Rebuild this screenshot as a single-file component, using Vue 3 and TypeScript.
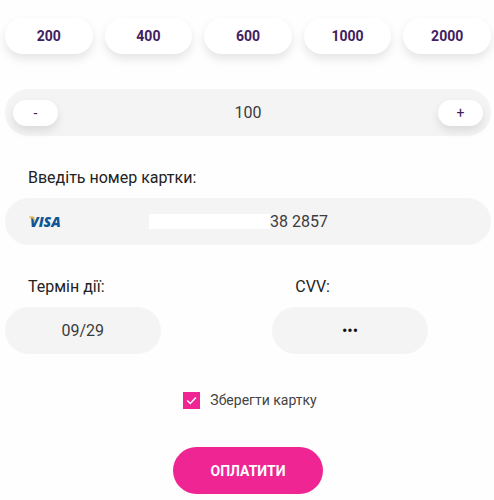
<script setup lang="ts">
import { ref } from 'vue'

const presets: number[] = [200, 400, 600, 1000, 2000]
const amount = ref<number>(100)
const cardTail = ref<string>('38 2857')
const expiry = ref<string>('09/29')
const cvv = ref<string>('•••')
const saveCard = ref<boolean>(true)

function change(step: number): void {
  amount.value = Math.max(0, amount.value + step)
}
</script>

<template>
  <form class="payment" @submit.prevent>
    <div class="presets">
      <button v-for="value in presets" :key="value" type="button" class="preset" @click="amount = value">
        {{ value }}
      </button>
    </div>

    <div class="field amount">
      <button type="button" class="step" @click="change(-10)">-</button>
      <input v-model.number="amount" class="entry" type="text" inputmode="numeric" aria-label="Сума" />
      <button type="button" class="step" @click="change(10)">+</button>
    </div>

    <label class="caption" for="card">Введіть номер картки:</label>
    <div class="field card">
      <svg class="brand" viewBox="0 0 40 24" role="img" aria-label="VISA">
        <text x="1" y="17" fill="#0f5494">VISA</text>
        <path d="M0 6.4h4.2q.8 0 1 .8l.8 4.2Q4.200 8 0 6.900z" fill="#e0aa3c" />
      </svg>
      <span class="mask"></span>
      <input id="card" v-model="cardTail" class="entry card-entry" type="text" />
    </div>

    <div class="details">
      <div class="detail">
        <label class="caption" for="expiry">Термін дії:</label>
        <input id="expiry" v-model="expiry" class="field entry" type="text" />
      </div>
      <div class="detail">
        <label class="caption" for="cvv">CVV:</label>
        <input id="cvv" v-model="cvv" class="field entry cvv" type="text" />
      </div>
    </div>

    <label class="save">
      <span class="tick">
        <input v-model="saveCard" type="checkbox" />
        <svg v-if="saveCard" viewBox="0 0 18 18" aria-hidden="true">
          <path d="M4.5 9l3.2 3.2 6-6.4" fill="none" stroke="#fff" stroke-width="1.6" />
        </svg>
      </span>
      <span>Зберегти картку</span>
    </label>

    <button type="submit" class="pay">ОПЛАТИТИ</button>
  </form>
</template>

<style>
body {
  background: #fefefe;
}
</style>

<style scoped>
.payment {
  display: flex;
  flex-direction: column;
  padding: 18px 3px 6px 5px;
  font-family: Roboto, "Liberation Sans", sans-serif;
  font-size: 16px;
  color: #222;
}

button,
input {
  box-sizing: border-box;
  margin: 0;
  padding: 0;
  border: 0;
  font: inherit;
}

button {
  cursor: pointer;
}

.presets {
  display: grid;
  grid-template-columns: repeat(5, 1fr);
  gap: 12px;
}

.preset {
  height: 36px;
  border-radius: 18px;
  background: #fff;
  box-shadow: 0 5px 10px rgba(0, 0, 0, 0.1);
  color: #41205f;
  font-size: 14px;
  font-weight: 700;
}

.field {
  box-sizing: border-box;
  height: 47px;
  border-radius: 24px;
  background: #f4f4f4;
}

.entry {
  min-width: 0;
  color: #3c3c3c;
  text-align: center;
  outline: none;
}

.amount {
  display: flex;
  align-items: center;
  margin: 35px 0 32px;
  padding: 0 8px;
}

.amount .entry {
  flex: 1;
  background: none;
}

.step {
  width: 45px;
  height: 26px;
  border-radius: 13px;
  background: #fff;
  box-shadow: 0 5px 10px rgba(0, 0, 0, 0.1);
  color: #41205f;
  font-size: 14px;
}

.caption {
  padding-left: 23px;
  line-height: 20px;
}

.card {
  display: grid;
  grid-template-columns: 120px 121px 1fr;
  align-items: center;
  margin-top: 10px;
  padding-left: 24px;
}

.brand {
  width: 40px;
  height: 24px;
  font-family: "Open Sans", sans-serif;
  font-size: 14px;
  font-style: italic;
  font-weight: 800;
}

.mask {
  height: 15px;
  background: #fff;
}

.card-entry {
  background: none;
  text-align: left;
}

.details {
  display: grid;
  grid-template-columns: 32% 32%;
  column-gap: 23%;
  margin-top: 32px;
}

.detail {
  display: flex;
  flex-direction: column;
  gap: 10px;
}

.cvv {
  color: #111;
}

.save {
  display: flex;
  align-items: center;
  align-self: center;
  gap: 10px;
  margin-top: 36px;
  padding-left: 4px;
  color: #444;
  font-size: 14px;
  line-height: 20px;
}

.tick {
  display: grid;
}

.tick > * {
  grid-area: 1 / 1;
  width: 17px;
  height: 17px;
}

.tick input {
  appearance: none;
  border: 1px solid #ef2593;
}

.tick input:checked {
  background: #ef2593;
}

.tick svg {
  pointer-events: none;
}

.pay {
  align-self: center;
  height: 47px;
  margin-top: 37px;
  padding: 0 38px;
  border-radius: 24px;
  background: #ef2593;
  color: #fff;
  font-size: 14px;
  font-weight: 700;
}
</style>
